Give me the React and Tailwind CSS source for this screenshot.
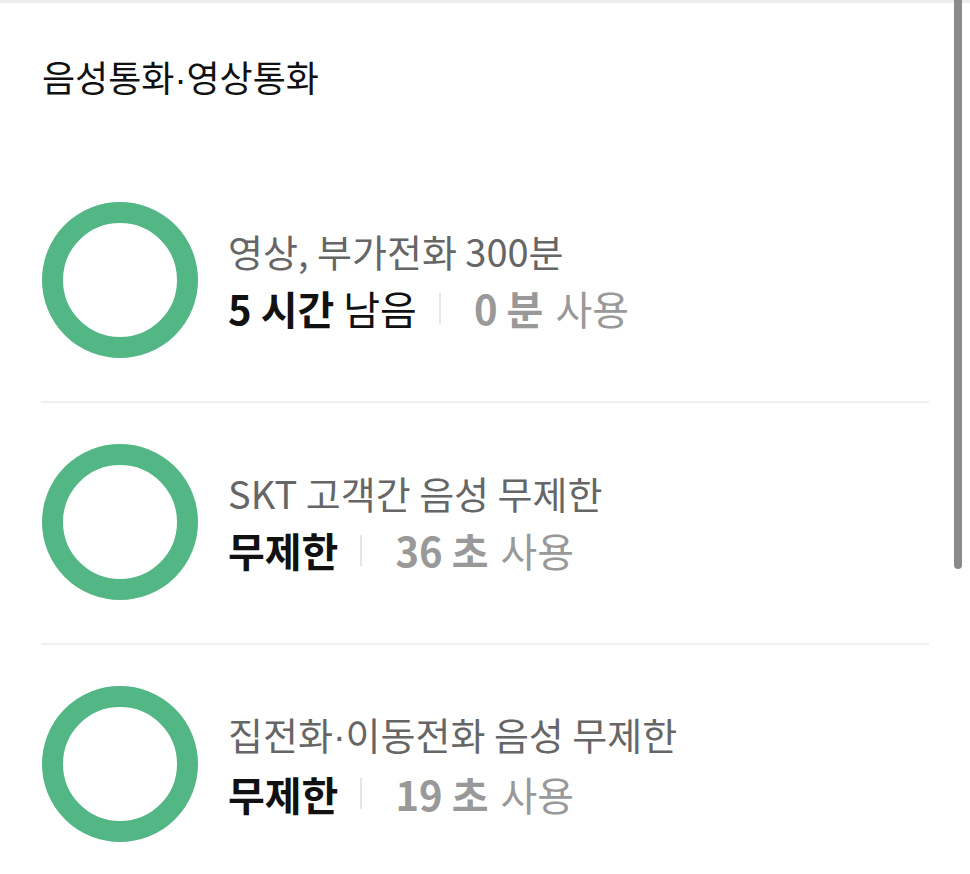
import React from "react";

const plans = [
  { title: "영상, 부가전화 300분", main: "5 시간", suffix: "남음", usedNum: "0", usedUnit: "분" },
  { title: "SKT 고객간 음성 무제한", main: "무제한", suffix: "", usedNum: "36", usedUnit: "초" },
  { title: "집전화", title2: "이동전화 음성 무제한", main: "무제한", suffix: "", usedNum: "19", usedUnit: "초" },
];

// the CJK font draws the middle dot very wide, take it from a latin face
function Dot() {
  return <span style={{ fontFamily: '"Liberation Sans", sans-serif' }}>·</span>;
}

function Ring() {
  return <div className="w-[156px] h-[156px] shrink-0 rounded-full border-[21px] border-[#53b685]" />;
}

function PlanRow({ plan, last }) {
  return (
    <div className={`flex items-center pt-[41px] pb-[43px] ${last ? "" : "border-b-2 border-[#efefef]"}`}>
      <div className="ml-px">
        <Ring />
      </div>
      <div className="ml-[30px] flex flex-col">
        <div className="text-[38px] leading-[56px] text-[#666666]">
          {plan.title}
          {plan.title2 && (
            <>
              <Dot />
              {plan.title2}
            </>
          )}
        </div>
        <div className="flex items-center text-[40px] leading-[58px]">
          <span className="font-bold text-[#111111]">{plan.main}</span>
          {plan.suffix && <span className="ml-[9px] text-[#111111]">{plan.suffix}</span>}
          <span className="ml-[22px] mr-[33px] w-[2px] h-[31px] bg-[#e6e6e6]" />
          <span className="font-bold text-[#999999]">{plan.usedNum} {plan.usedUnit}</span>
          <span className="ml-[12px] text-[#999999]">사용</span>
        </div>
      </div>
    </div>
  );
}

export default function App() {
  return (
    <div
      className="relative w-[970px] h-[874px] bg-white overflow-hidden"
      style={{ fontFamily: '"Noto Sans CJK KR", "Noto Sans", sans-serif' }}
    >
      <div className="h-[3px] bg-[#ececec]" />
      <h2 className="mt-[51px] pl-[42px] text-[36px] leading-[44px] font-normal text-[#111111]">
        음성통화<Dot />영상통화
      </h2>
      <div className="mt-[59px] px-[41px]">
        {plans.map((p, i) => (
          <PlanRow key={i} plan={p} last={i === plans.length - 1} />
        ))}
      </div>
      <div className="absolute top-0 left-[954px] w-[8px] h-[569px] rounded-b-full bg-[#8a8a8a]" />
    </div>
  );
}
